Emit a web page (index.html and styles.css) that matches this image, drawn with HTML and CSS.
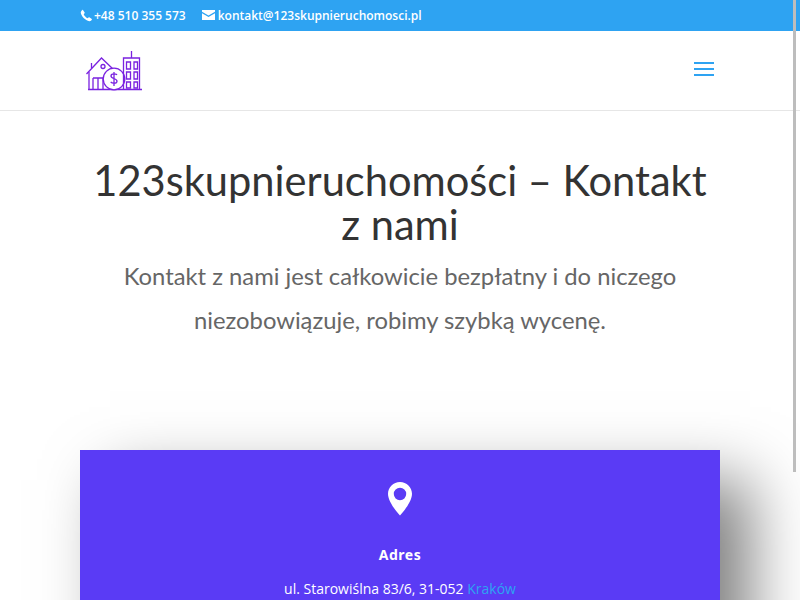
FILE: index.html
```html
<!DOCTYPE html>
<html lang="pl">
<head>
<meta charset="utf-8">
<title>123skupnieruchomości – Kontakt z nami</title>
<link rel="stylesheet" href="styles.css">
</head>
<body>
<div class="topbar">
  <div class="wrap topbar-in">
    <span class="top-item top-phone"><svg class="ic-phone" viewBox="0 0 14 14" aria-hidden="true"><path d="M3.200 1.100 5 3.900c.2.3.1.6-.1.8l-.9.9c.5 1.500 2.600 3.800 4.300 4.400l.9-.9c.2-.2.5-.3.8-.1l2.700 1.700c.2.2.2.5.1.700-.5 1-1.600 2-2.700 1.900C5.500 12.500 1.300 7.600.8 4.100.7 3 1.700 1.800 2.500 1c.2-.2.5-.1.7.1z"/></svg>+48 510 355 573</span>
    <span class="top-item"><svg class="ic-mail" viewBox="0 0 13 10" aria-hidden="true"><path d="M0 0h13v1.800L6.500 5.600 0 1.800z"/><path d="M0 3.200 6.500 7 13 3.200V10H0z"/></svg>kontakt@123skupnieruchomosci.pl</span>
  </div>
</div>
<header class="header">
  <div class="wrap header-in">
    <svg class="logo" viewBox="0 0 56 40" fill="none" stroke="#7a22e0" stroke-width="1.300" aria-hidden="true">
      <path d="M2 38.500h54" stroke-width="1.600"/>
      <path d="M0.500 23 15.500 7 28 19"/>
      <path d="M3 21v17.500M5.500 17v-5"/>
      <path d="M7 27h10v11.500M7 27v11.500M12 27v11.500"/>
      <circle cx="17" cy="15.500" r="2"/>
      <circle cx="28" cy="28" r="10.800" fill="#fff"/>
      <path d="M31 24c-1-1.500-6-1.700-6 1 0 3 6 2 6 5.200 0 2.600-5 2.500-6.300.7M28 21v14"/>
      <path d="M37.500 38.500V7h16v31.500M45.500 7V0"/>
      <path d="M40.500 11h4v7h-4zM48 11h3.500v7H48zM40.500 21h4v7h-4zM48 21h3.500v7H48zM40.500 31h4v6h-4zM48 31h3.500v6H48z"/>
    </svg>
    <button class="burger" type="button" aria-label="Menu"><span></span><span></span><span></span></button>
  </div>
</header>
<main class="wrap">
  <section class="intro">
    <h1>123skupnieruchomości – Kontakt z nami</h1>
    <p>Kontakt z nami jest całkowicie bezpłatny i do niczego niezobowiązuje, robimy szybką wycenę.</p>
  </section>
  <section class="card">
    <svg class="pin" viewBox="0 0 24 34" aria-hidden="true"><path fill-rule="evenodd" d="M12 0C5.400 0 0 5.300 0 11.800 0 19.500 8.300 29.500 12 33.500c3.700-4 12-14 12-21.700C24 5.300 18.600 0 12 0zm0 5.800a6.200 6.200 0 1 1 0 12.400 6.200 6.200 0 0 1 0-12.400z"/></svg>
    <h2>Adres</h2>
    <p>ul. Starowiślna 83/6, 31-052 <a href="#">Kraków</a></p>
  </section>
</main>
<div class="scroll-thumb"></div>
</body>
</html>
```
FILE: styles.css
```css
* { box-sizing: border-box; }
html, body { margin: 0; height: 600px; overflow: hidden; background: #fff; }
body { font-family: "Open Sans", sans-serif; color: #666; }
.wrap { width: 640px; margin: 0 auto; }
.topbar { height: 31px; background: #2ea3f2; color: #fff; font-size: 12px; font-weight: 600; }
.topbar-in { display: flex; align-items: center; height: 31px; gap: 16px; }
.top-item { display: flex; align-items: center; line-height: 1; }
.ic-phone { width: 13px; height: 13px; fill: #fff; margin-right: 1px; }
.ic-mail { width: 13px; height: 10px; fill: #fff; margin-right: 3px; margin-top: -2px; }
.header { height: 80px; border-bottom: 1px solid #e6e6e6; }
.header-in { display: flex; align-items: center; justify-content: space-between; height: 79px; padding-top: 1px; }
.logo { width: 56px; height: 40px; margin-left: 6px; }
.burger { display: flex; flex-direction: column; gap: 4px; width: 20px; padding: 0; border: 0; background: none; margin-right: 6px; margin-top: -4px; }
.burger span { display: block; height: 2px; background: #2ea3f2; }
.intro { text-align: center; padding-top: 47px; height: 339px; }
h1 { margin: 0; font: 400 41.6px/44px Lato, sans-serif; color: #333; }
.intro p { margin: 8px 0 0; font: 400 23.8px/44px Lato, sans-serif; color: #666; padding: 0 20px; }
.card { height: 300px; background: #5a3bf5; box-shadow: 30px 30px 60px rgba(0,0,0,.5); text-align: center; color: #fff; padding-top: 32px; }
.pin { display: block; width: 24px; height: 34px; fill: #fff; margin: 0 auto; }
.card h2 { margin: 29px 0 0; font: 700 14px/20px "Noto Sans", sans-serif; letter-spacing: .5px; color: #fff; }
.card p { margin: 14px 0 0; font-size: 14px; line-height: 20px; }
.card a { color: #2ea3f2; text-decoration: none; }
.scroll-thumb { position: absolute; top: 0; left: 793px; width: 3px; height: 472px; background: #bdbdbd; }
```
